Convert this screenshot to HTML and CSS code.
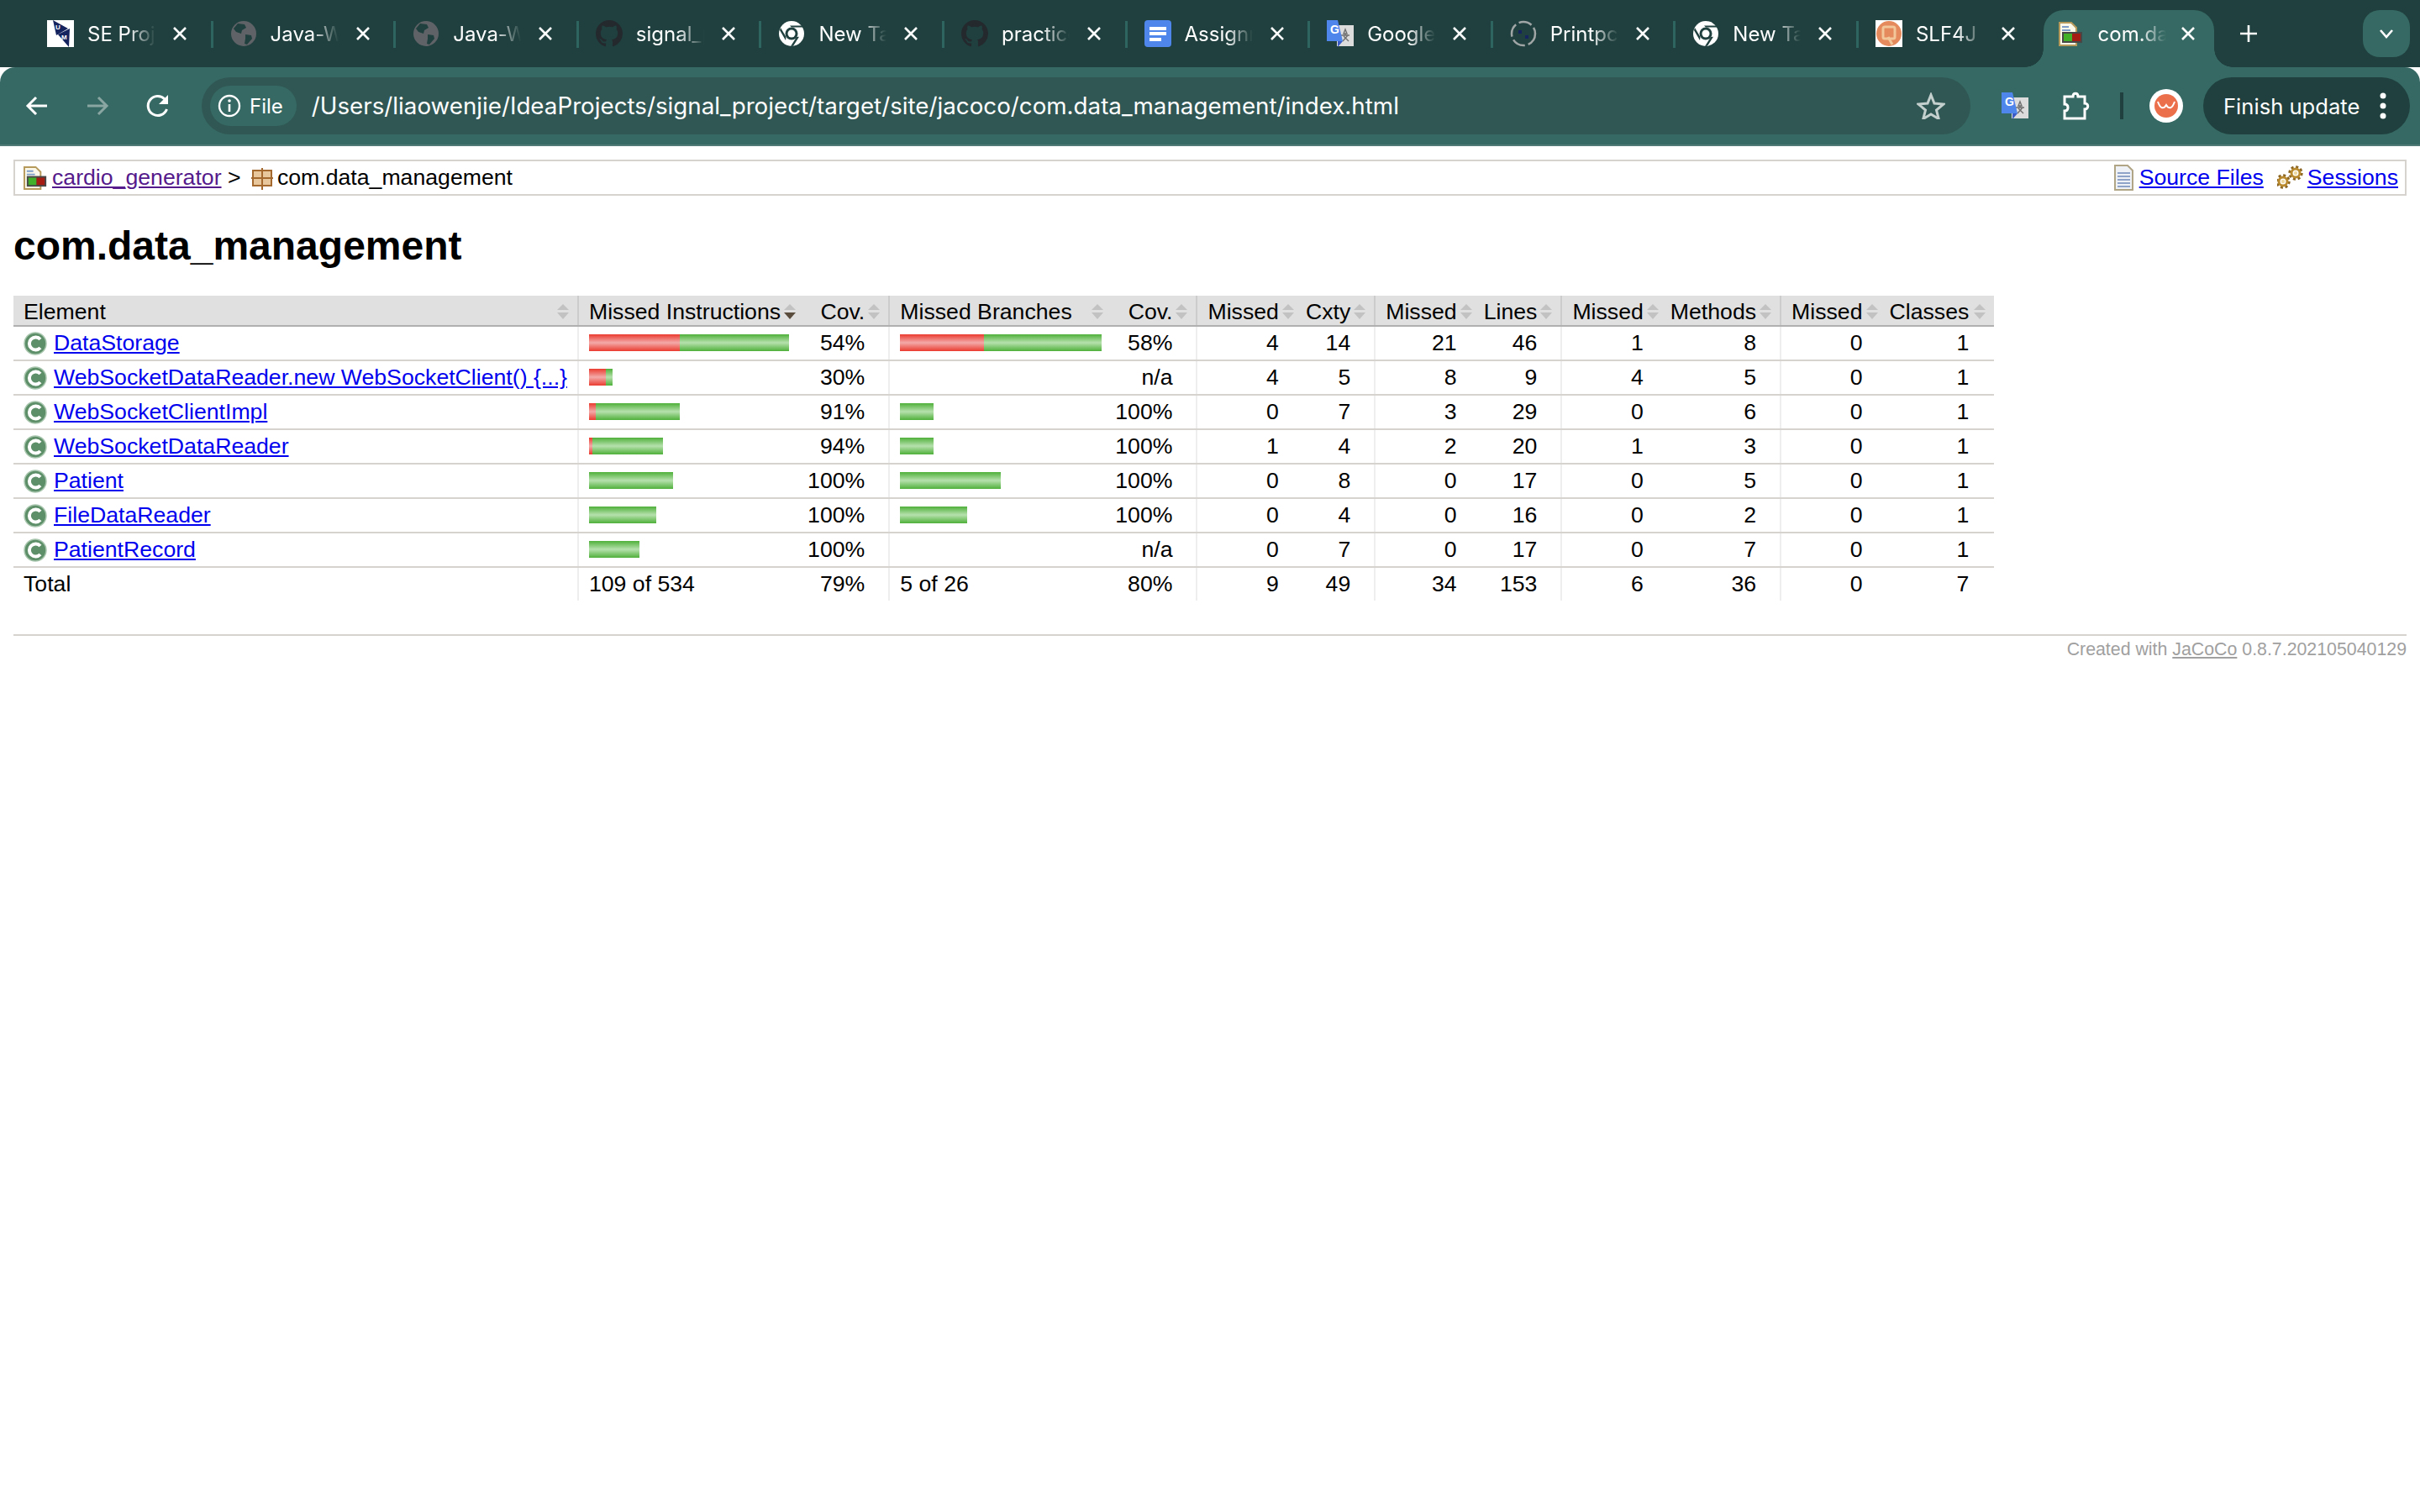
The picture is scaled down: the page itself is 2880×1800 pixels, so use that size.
FILE: index.html
```html
<!DOCTYPE html>
<html lang="en">
  <head>
    <meta charset="UTF-8" />
    <title>com.data_management</title>
    <link rel="stylesheet" href="styles.css">
  </head>
  <body>
    <svg class="defs" width="0" height="0">
      <symbol id="i-close" viewBox="0 0 18 18"><path d="M2 2l14 14M16 2L2 16" stroke="#fff" stroke-width="2.6" fill="none"/></symbol>
      <symbol id="i-globe" viewBox="0 0 32 32"><circle cx="16" cy="16" r="15" fill="#5f6368"/><path d="M9 4l8 1 2 4-5 3-1 4-6-2-3-4zM18 17l7 1 1 4-6 7-3-1 1-6z" fill="#1f403e"/></symbol>
      <symbol id="i-github" viewBox="0 0 16 16"><path fill="#24292e" d="M8 0C3.58 0 0 3.58 0 8c0 3.54 2.29 6.53 5.47 7.59.4.07.55-.17.55-.38 0-.19-.01-.82-.01-1.49-2.01.37-2.53-.49-2.69-.94-.09-.23-.48-.94-.82-1.13-.28-.15-.68-.52-.01-.53.63-.01 1.08.58 1.23.82.72 1.21 1.87.87 2.33.66.07-.52.28-.87.51-1.07-1.78-.2-3.64-.89-3.64-3.95 0-.87.31-1.59.82-2.15-.08-.2-.36-1.02.08-2.12 0 0 .67-.21 2.2.82.64-.18 1.32-.27 2-.27s1.36.09 2 .27c1.53-1.04 2.2-.82 2.2-.82.44 1.1.16 1.92.08 2.12.51.56.82 1.27.82 2.15 0 3.07-1.87 3.75-3.65 3.95.29.25.54.73.54 1.48 0 1.07-.01 1.93-.01 2.2 0 .21.15.46.55.38A8.01 8.01 0 0 0 16 8c0-4.42-3.58-8-8-8z"/></symbol>
      <symbol id="i-chrome" viewBox="0 0 32 32"><circle cx="16" cy="16" r="15" fill="#fff"/><circle cx="16" cy="16" r="7.5" fill="#1f403e"/><circle cx="16" cy="16" r="4.5" fill="#fff"/><path d="M16 8.5h14l-1-2H14zM9.5 20L3 9l-1 3 7 12zM22 20l-7 11 3-.2 7-11z" fill="#1f403e"/></symbol>
      <symbol id="i-report" viewBox="0 0 32 32"><path d="M1 3h14l6 6v21H1z" fill="#fbf8ea" stroke="#b59a5c" stroke-width="2"/><path d="M4 8h8M4 12h10" stroke="#7f9dc9" stroke-width="2"/><path d="M4 14h24v13H4z" fill="#474747"/><path d="M6 16h10v9H6z" fill="#43b02a"/><path d="M16 16h10v9H16z" fill="#a51d12"/></symbol>
      <symbol id="i-translate" viewBox="0 0 32 32"><path d="M12 6h20v25H12z" fill="#dcdcdc"/><path d="M22 11l2 5h-4zM17 18h10M22 16v2M19 25l6-7M20 19l6 6" stroke="#6f6f6f" stroke-width="1.4" fill="none"/><path d="M0 0h13l6 25H0z" fill="#4f86ec"/><path d="M13 25h6l-6 7z" fill="#3b5bc7"/><text class="g-letter" x="4" y="16">G</text></symbol>
      <symbol id="i-class" viewBox="0 0 36 31"><circle cx="14" cy="16" r="13" fill="#5d8f68"/><circle cx="14" cy="16" r="13" fill="none" stroke="#a9c6ae" stroke-width="1.5"/><path d="M20 11a7.500 7.500 0 1 0 0 10" fill="none" stroke="#fff" stroke-width="4"/></symbol>
      <symbol id="i-gear" viewBox="0 0 18 18"><circle cx="9" cy="9" r="7.200" fill="none" stroke="#8a6420" stroke-width="3" stroke-dasharray="3 2.650"/><circle cx="9" cy="9" r="5" fill="none" stroke="#b98a2e" stroke-width="3"/><circle cx="9" cy="9" r="2.200" fill="#eed9a0"/></symbol>
    </svg>

    <div class="browser">
      <div class="tabstrip">
        <div class="tab">
          <svg class="favicon" viewBox="0 0 32 32"><path fill="#fff" d="M0 0h32v32H0z"/><path fill="#15245f" d="M7 0l18 10-14 8zM13 17l14-7-1 22z"/><text class="se-letter" x="10" y="11">U</text><text class="se-letter" x="17" y="23">M</text></svg>
          <span class="title">SE Project</span>
          <svg class="close"><use href="#i-close"/></svg>
        </div>
        <div class="tab">
          <svg class="favicon"><use href="#i-globe"/></svg>
          <span class="title">Java-WebSocket</span>
          <svg class="close"><use href="#i-close"/></svg>
        </div>
        <div class="tab">
          <svg class="favicon"><use href="#i-globe"/></svg>
          <span class="title">Java-WebSocket</span>
          <svg class="close"><use href="#i-close"/></svg>
        </div>
        <div class="tab">
          <svg class="favicon"><use href="#i-github"/></svg>
          <span class="title">signal_project</span>
          <svg class="close"><use href="#i-close"/></svg>
        </div>
        <div class="tab">
          <svg class="favicon"><use href="#i-chrome"/></svg>
          <span class="title">New Tab</span>
          <svg class="close"><use href="#i-close"/></svg>
        </div>
        <div class="tab">
          <svg class="favicon"><use href="#i-github"/></svg>
          <span class="title">practice</span>
          <svg class="close"><use href="#i-close"/></svg>
        </div>
        <div class="tab">
          <svg class="favicon" viewBox="0 0 32 32"><rect width="32" height="32" rx="4" fill="#4f86ec"/><path d="M6 10h20M6 16h20M6 23h14" stroke="#fff" stroke-width="4"/></svg>
          <span class="title">Assignment</span>
          <svg class="close"><use href="#i-close"/></svg>
        </div>
        <div class="tab">
          <svg class="favicon"><use href="#i-translate"/></svg>
          <span class="title">Google Translate</span>
          <svg class="close"><use href="#i-close"/></svg>
        </div>
        <div class="tab">
          <svg class="favicon" viewBox="0 0 32 32"><circle cx="16" cy="16" r="14" fill="none" stroke="#a0a5a5" stroke-width="2.5" stroke-dasharray="16 4"/><path d="M10 12h4v4h-4zM18 18h4v4h-4z" fill="#15245f"/></svg>
          <span class="title">Printpc</span>
          <svg class="close"><use href="#i-close"/></svg>
        </div>
        <div class="tab">
          <svg class="favicon"><use href="#i-chrome"/></svg>
          <span class="title">New Tab</span>
          <svg class="close"><use href="#i-close"/></svg>
        </div>
        <div class="tab tab-last">
          <svg class="favicon" viewBox="0 0 32 32"><path fill="#fff" d="M0 0h32v32H0z"/><circle cx="16" cy="16" r="15" fill="#e58a5c"/><rect x="9" y="8" width="14" height="14" rx="2" fill="none" stroke="#f2c79a" stroke-width="3"/><path d="M15 20l5 9" stroke="#f2c79a" stroke-width="3"/></svg>
          <span class="title">SLF4J Manual</span>
          <svg class="close"><use href="#i-close"/></svg>
        </div>
        <div class="tab-active">
          <svg class="favicon"><use href="#i-report"/></svg>
          <span class="title">com.data_management</span>
          <svg class="close"><use href="#i-close"/></svg>
        </div>
        <div class="newtab">
          <svg width="24" height="24" viewBox="0 0 24 24"><path d="M12 2v20M2 12h20" stroke="#fff" stroke-width="2.6"/></svg>
        </div>
        <div class="tabsearch">
          <svg width="20" height="14" viewBox="0 0 20 14"><path d="M3 3l7 8 7-8" stroke="#fff" stroke-width="2.6" fill="none"/></svg>
        </div>
      </div>

      <div class="toolbar">
        <div class="navbtn">
          <svg width="30" height="30" viewBox="0 0 30 30"><path d="M27 15H4M14 5L4 15l10 10" stroke="#fff" stroke-width="3" fill="none"/></svg>
        </div>
        <div class="navbtn">
          <svg width="30" height="30" viewBox="0 0 30 30"><path d="M3 15h23M16 5l10 10-10 10" stroke="#8aa6a2" stroke-width="3" fill="none"/></svg>
        </div>
        <div class="navbtn">
          <svg width="30" height="30" viewBox="0 0 30 30"><path d="M25.500 19A11.500 11.500 0 1 1 23 7l3 3" stroke="#fff" stroke-width="3" fill="none"/><path d="M27 2v11H16z" fill="#fff"/></svg>
        </div>
        <div class="omnibox">
          <div class="chip">
            <svg width="28" height="28" viewBox="0 0 28 28"><circle cx="14" cy="14" r="12" fill="none" stroke="#fff" stroke-width="2.4"/><path d="M14 12v9" stroke="#fff" stroke-width="2.6"/><circle cx="14" cy="8" r="1.8" fill="#fff"/></svg>
            <span>File</span>
          </div>
          <span class="url">/Users/liaowenjie/IdeaProjects/signal_project/target/site/jacoco/com.data_management/index.html</span>
          <svg class="star" width="34" height="32" viewBox="0 0 34 32"><path d="M17 3l4 10 11 1-8.500 7 2.700 10.500L17 26l-9.200 5.500L10.500 21 2 14l11-1z" fill="none" stroke="#c3cfcd" stroke-width="3"/></svg>
        </div>
        <svg class="ext-translate"><use href="#i-translate"/></svg>
        <svg class="ext-puzzle" width="34" height="36" viewBox="0 0 34 36"><path d="M3 7h10c0-5 6-5 6 0h8v8c5 0 5 7 0 7v11H3V24c3 0 4-2 4-4s-1-4-4-4z" fill="none" stroke="#fff" stroke-width="3"/></svg>
        <div class="tool-sep"></div>
        <svg class="avatar" width="40" height="40" viewBox="0 0 40 40"><circle cx="20" cy="20" r="20" fill="#fff"/><circle cx="20" cy="20" r="14" fill="#ec6f4c"/><path d="M10 15c3 9 7 9 10 4 3 5 7 5 10-4" fill="none" stroke="#fff" stroke-width="2"/></svg>
        <div class="update">
          <span>Finish update</span>
          <svg width="10" height="34" viewBox="0 0 10 34"><circle cx="5" cy="5" r="3.500" fill="#fff"/><circle cx="5" cy="17" r="3.500" fill="#fff"/><circle cx="5" cy="29" r="3.500" fill="#fff"/></svg>
        </div>
      </div>
      <div class="toolbar-edge"></div>
    </div>

    <div class="page">
      <div class="breadcrumb">
        <span class="crumbs"><svg class="crumb-icon"><use href="#i-report" x="2" width="31" height="31"/></svg><a class="visited" href="#">cardio_generator</a> &gt; <svg class="crumb-icon" viewBox="0 0 36 31"><path d="M7 7h22v18H7z" fill="#e8c79c"/><path d="M7 7h22v18H7zM18 4v26M5 16h26" fill="none" stroke="#a4692f" stroke-width="2"/></svg>com.data_management</span>
        <span class="crumbs"><svg class="crumb-icon" viewBox="0 0 36 31"><path d="M7 1h15l6 6v23H7z" fill="#eef1f6" stroke="#b0a585" stroke-width="2"/><path d="M10 10h15M10 14h15M10 18h15M10 22h15M10 26h15" stroke="#8fa3c9" stroke-width="2"/></svg><a href="#">Source Files</a><svg class="crumb-icon session" viewBox="0 0 36 31"><use href="#i-gear" x="-2" y="11" width="18" height="18"/><use href="#i-gear" x="13" y="1" width="18" height="18"/></svg><a href="#">Sessions</a></span>
      </div>

      <h1>com.data_management</h1>

      <table class="coverage">
        <thead>
          <tr>
            <td class="sort">Element</td>
            <td class="bar sort sort-down">Missed Instructions</td>
            <td class="ctr2 sort">Cov.</td>
            <td class="bar sort">Missed Branches</td>
            <td class="ctr2 sort">Cov.</td>
            <td class="ctr1 sort">Missed</td>
            <td class="ctr2 sort">Cxty</td>
            <td class="ctr1 sort">Missed</td>
            <td class="ctr2 sort">Lines</td>
            <td class="ctr1 sort">Missed</td>
            <td class="ctr2 sort">Methods</td>
            <td class="ctr1 sort">Missed</td>
            <td class="ctr2 sort">Classes</td>
          </tr>
        </thead>
        <tbody>
          <tr>
            <td class="el"><svg class="el-icon"><use href="#i-class"/></svg><a href="#">DataStorage</a></td>
            <td class="bar"><div class="barline"><span class="red" style="width:108px"></span><span class="green" style="width:130px"></span></div></td>
            <td class="ctr2">54%</td>
            <td class="bar"><div class="barline"><span class="red" style="width:100px"></span><span class="green" style="width:140px"></span></div></td>
            <td class="ctr2">58%</td>
            <td class="ctr1">4</td><td class="ctr2">14</td>
            <td class="ctr1">21</td><td class="ctr2">46</td>
            <td class="ctr1">1</td><td class="ctr2">8</td>
            <td class="ctr1">0</td><td class="ctr2">1</td>
          </tr>
          <tr>
            <td class="el"><svg class="el-icon"><use href="#i-class"/></svg><a href="#">WebSocketDataReader.new WebSocketClient() {...}</a></td>
            <td class="bar"><div class="barline"><span class="red" style="width:20px"></span><span class="green" style="width:8px"></span></div></td>
            <td class="ctr2">30%</td>
            <td class="bar"></td>
            <td class="ctr2">n/a</td>
            <td class="ctr1">4</td><td class="ctr2">5</td>
            <td class="ctr1">8</td><td class="ctr2">9</td>
            <td class="ctr1">4</td><td class="ctr2">5</td>
            <td class="ctr1">0</td><td class="ctr2">1</td>
          </tr>
          <tr>
            <td class="el"><svg class="el-icon"><use href="#i-class"/></svg><a href="#">WebSocketClientImpl</a></td>
            <td class="bar"><div class="barline"><span class="red" style="width:8px"></span><span class="green" style="width:100px"></span></div></td>
            <td class="ctr2">91%</td>
            <td class="bar"><div class="barline"><span class="green" style="width:40px"></span></div></td>
            <td class="ctr2">100%</td>
            <td class="ctr1">0</td><td class="ctr2">7</td>
            <td class="ctr1">3</td><td class="ctr2">29</td>
            <td class="ctr1">0</td><td class="ctr2">6</td>
            <td class="ctr1">0</td><td class="ctr2">1</td>
          </tr>
          <tr>
            <td class="el"><svg class="el-icon"><use href="#i-class"/></svg><a href="#">WebSocketDataReader</a></td>
            <td class="bar"><div class="barline"><span class="red" style="width:4px"></span><span class="green" style="width:84px"></span></div></td>
            <td class="ctr2">94%</td>
            <td class="bar"><div class="barline"><span class="green" style="width:40px"></span></div></td>
            <td class="ctr2">100%</td>
            <td class="ctr1">1</td><td class="ctr2">4</td>
            <td class="ctr1">2</td><td class="ctr2">20</td>
            <td class="ctr1">1</td><td class="ctr2">3</td>
            <td class="ctr1">0</td><td class="ctr2">1</td>
          </tr>
          <tr>
            <td class="el"><svg class="el-icon"><use href="#i-class"/></svg><a href="#">Patient</a></td>
            <td class="bar"><div class="barline"><span class="green" style="width:100px"></span></div></td>
            <td class="ctr2">100%</td>
            <td class="bar"><div class="barline"><span class="green" style="width:120px"></span></div></td>
            <td class="ctr2">100%</td>
            <td class="ctr1">0</td><td class="ctr2">8</td>
            <td class="ctr1">0</td><td class="ctr2">17</td>
            <td class="ctr1">0</td><td class="ctr2">5</td>
            <td class="ctr1">0</td><td class="ctr2">1</td>
          </tr>
          <tr>
            <td class="el"><svg class="el-icon"><use href="#i-class"/></svg><a href="#">FileDataReader</a></td>
            <td class="bar"><div class="barline"><span class="green" style="width:80px"></span></div></td>
            <td class="ctr2">100%</td>
            <td class="bar"><div class="barline"><span class="green" style="width:80px"></span></div></td>
            <td class="ctr2">100%</td>
            <td class="ctr1">0</td><td class="ctr2">4</td>
            <td class="ctr1">0</td><td class="ctr2">16</td>
            <td class="ctr1">0</td><td class="ctr2">2</td>
            <td class="ctr1">0</td><td class="ctr2">1</td>
          </tr>
          <tr>
            <td class="el"><svg class="el-icon"><use href="#i-class"/></svg><a href="#">PatientRecord</a></td>
            <td class="bar"><div class="barline"><span class="green" style="width:60px"></span></div></td>
            <td class="ctr2">100%</td>
            <td class="bar"></td>
            <td class="ctr2">n/a</td>
            <td class="ctr1">0</td><td class="ctr2">7</td>
            <td class="ctr1">0</td><td class="ctr2">17</td>
            <td class="ctr1">0</td><td class="ctr2">7</td>
            <td class="ctr1">0</td><td class="ctr2">1</td>
          </tr>
        </tbody>
        <tfoot>
          <tr>
            <td>Total</td>
            <td class="bar">109 of 534</td>
            <td class="ctr2">79%</td>
            <td class="bar">5 of 26</td>
            <td class="ctr2">80%</td>
            <td class="ctr1">9</td><td class="ctr2">49</td>
            <td class="ctr1">34</td><td class="ctr2">153</td>
            <td class="ctr1">6</td><td class="ctr2">36</td>
            <td class="ctr1">0</td><td class="ctr2">7</td>
          </tr>
        </tfoot>
      </table>

      <div class="footer">
        <span>Created with <a href="#">JaCoCo</a> 0.8.7.202105040129</span>
      </div>
    </div>
  </body>
</html>
```

FILE: styles.css
```css
body {
  font-family: "Liberation Sans", Arial, sans-serif;
  margin: 0;
  padding: 0;
  background-color: #fff;
  color: #000;
}
.defs {
  position: absolute;
}
.g-letter {
  font-family: "Liberation Sans", Arial, sans-serif;
  font-size: 14px;
  font-weight: bold;
  fill: #fff;
}
.se-letter {
  font-family: "Liberation Sans", Arial, sans-serif;
  font-size: 8px;
  font-weight: bold;
  fill: #fff;
}

/* browser chrome */
.browser {
  font-family: Inter, "Liberation Sans", sans-serif;
  color: #fff;
}
.tabstrip {
  display: flex;
  height: 80px;
  padding: 12px 12px 0 36px;
  box-sizing: border-box;
  background-color: #1f403e;
}
.tab {
  position: relative;
  display: flex;
  align-items: center;
  flex: none;
  width: 217.6px;
  height: 56px;
  padding-left: 20px;
  box-sizing: border-box;
}
.tab::after {
  content: "";
  position: absolute;
  right: 0;
  top: 13px;
  width: 3px;
  height: 32px;
  background-color: #2e6560;
}
.tab-last::after {
  display: none;
}
.tab-active {
  position: relative;
  display: flex;
  align-items: center;
  flex: none;
  width: 203px;
  height: 68px;
  margin-left: 2px;
  padding: 0 0 12px 18px;
  box-sizing: border-box;
  background-color: #366963;
  border-radius: 24px 24px 0 0;
}
.tab-active .title {
  margin-left: 15px;
}
.tab-active .close {
  margin-left: 17px;
}
.tab-active::before,
.tab-active::after {
  content: "";
  position: absolute;
  bottom: 0;
  width: 22px;
  height: 22px;
}
.tab-active::before {
  left: -22px;
  background: radial-gradient(circle at 0 0, transparent 21.5px, #366963 22px);
}
.tab-active::after {
  right: -22px;
  background: radial-gradient(circle at 100% 0, transparent 21.5px, #366963 22px);
}
.favicon {
  flex: none;
  width: 32px;
  height: 32px;
}
.title {
  flex: none;
  width: 81px;
  margin-left: 16px;
  overflow: hidden;
  white-space: nowrap;
  font-size: 24px;
  -webkit-mask-image: linear-gradient(to right, #000 60%, transparent);
  mask-image: linear-gradient(to right, #000 60%, transparent);
}
.close {
  flex: none;
  width: 18px;
  height: 18px;
  margin-left: 20px;
}
.newtab {
  display: flex;
  align-items: center;
  justify-content: center;
  width: 36px;
  height: 56px;
  margin-left: 23px;
}
.tabsearch {
  display: flex;
  align-items: center;
  justify-content: center;
  width: 56px;
  height: 56px;
  margin-left: auto;
  border-radius: 20px;
  background-color: #366963;
}
.toolbar {
  display: flex;
  align-items: center;
  height: 92px;
  padding: 0 12px 0 29px;
  box-sizing: border-box;
  background-color: #366963;
  border-radius: 18px 18px 0 0;
}
.navbtn {
  display: flex;
  flex: none;
  width: 30px;
  margin-right: 42px;
}
.navbtn:nth-child(3) {
  margin-right: 37px;
}
.omnibox {
  display: flex;
  align-items: center;
  flex: none;
  width: 2105px;
  height: 68px;
  padding: 0 30px 0 10px;
  box-sizing: border-box;
  border-radius: 34px;
  background-color: #305754;
}
.chip {
  display: flex;
  align-items: center;
  gap: 10px;
  flex: none;
  height: 48px;
  padding: 0 16px 0 9px;
  border-radius: 24px;
  background-color: #366963;
  font-size: 24px;
}
.url {
  flex: 1;
  margin-left: 18px;
  font-size: 27.75px;
  white-space: nowrap;
}
.ext-translate {
  flex: none;
  width: 32px;
  height: 32px;
  margin-left: 37px;
}
.ext-puzzle {
  flex: none;
  margin-left: 40px;
}
.tool-sep {
  flex: none;
  width: 4px;
  height: 32px;
  margin-left: 35px;
  background-color: #1f403e;
}
.avatar {
  flex: none;
  margin-left: 31px;
}
.update {
  display: flex;
  align-items: center;
  justify-content: space-between;
  flex: none;
  width: 246px;
  height: 68px;
  margin-left: 24px;
  padding: 0 27px 0 24px;
  box-sizing: border-box;
  border-radius: 34px;
  background-color: #1f403e;
  font-size: 25.6px;
}
.toolbar-edge {
  height: 2px;
  background-color: #4f7a76;
}

/* report */
.page {
  margin: 16px;
  font-size: 26.67px;
  line-height: 31px;
}
a {
  color: #0000ee;
}
a.visited {
  color: #551a8b;
}
.breadcrumb {
  display: flex;
  justify-content: space-between;
  padding: 4px 8px;
  border: 2px solid #d6d3ce;
}
.crumb-icon {
  width: 36px;
  height: 31px;
  vertical-align: top;
}
.session {
  margin-left: 16px;
}
h1 {
  margin: 32px 0;
  font-size: 48px;
  line-height: 55px;
  font-weight: bold;
}
.coverage {
  border-collapse: collapse;
  empty-cells: show;
}
.coverage td {
  white-space: nowrap;
}
.coverage thead td {
  position: relative;
  padding: 4px 28px 0 12px;
  background-color: #e0e0e0;
  border-bottom: 2px solid #b0b0b0;
}
.coverage tbody td {
  padding: 4px 12px;
  border-bottom: 2px solid #d6d3ce;
}
.coverage tfoot td {
  padding: 4px 12px;
}
.coverage thead td.bar,
.coverage thead td.ctr1 {
  border-left: 2px solid #ccc;
}
.coverage tbody td.bar,
.coverage tbody td.ctr1,
.coverage tfoot td.bar,
.coverage tfoot td.ctr1 {
  border-left: 2px solid #eee;
}
.coverage td.ctr1 {
  text-align: right;
}
.coverage tbody td.ctr1,
.coverage tfoot td.ctr1,
.coverage tbody td.ctr2,
.coverage tfoot td.ctr2 {
  text-align: right;
  padding-right: 28px;
}
.coverage td.ctr2 {
  text-align: right;
}
.coverage thead td.ctr2,
.coverage tbody td.ctr2,
.coverage tfoot td.ctr2 {
  padding-left: 4px;
}
.coverage tr td:last-child {
  padding-right: 30px;
}

/* sort arrows in the header */
.sort::before,
.sort::after {
  content: "";
  position: absolute;
  right: 10px;
  width: 0;
  height: 0;
  border-left: 7px solid transparent;
  border-right: 7px solid transparent;
}
.sort::before {
  top: 10px;
  border-bottom: 7px solid #c2c2c2;
}
.sort::after {
  top: 20px;
  border-top: 8px solid #c2c2c2;
}
.sort-down::after {
  border-top-color: #5a4d3e;
}

.el-icon {
  width: 36px;
  height: 31px;
  vertical-align: top;
}
.barline {
  display: flex;
  height: 20px;
  margin: 5px 0 6px;
}
.red {
  background: linear-gradient(#ea3b2f, #f3aaa9 50%, #ea3b2f);
}
.green {
  background: linear-gradient(#4fb03a, #b6e1ad 50%, #4fb03a);
}
.footer {
  margin-top: 40px;
  padding-top: 4px;
  border-top: 2px solid #d6d3ce;
  text-align: right;
  font-size: 21.33px;
  line-height: 25px;
  color: #a0a0a0;
}
.footer a {
  color: #a0a0a0;
}
```
